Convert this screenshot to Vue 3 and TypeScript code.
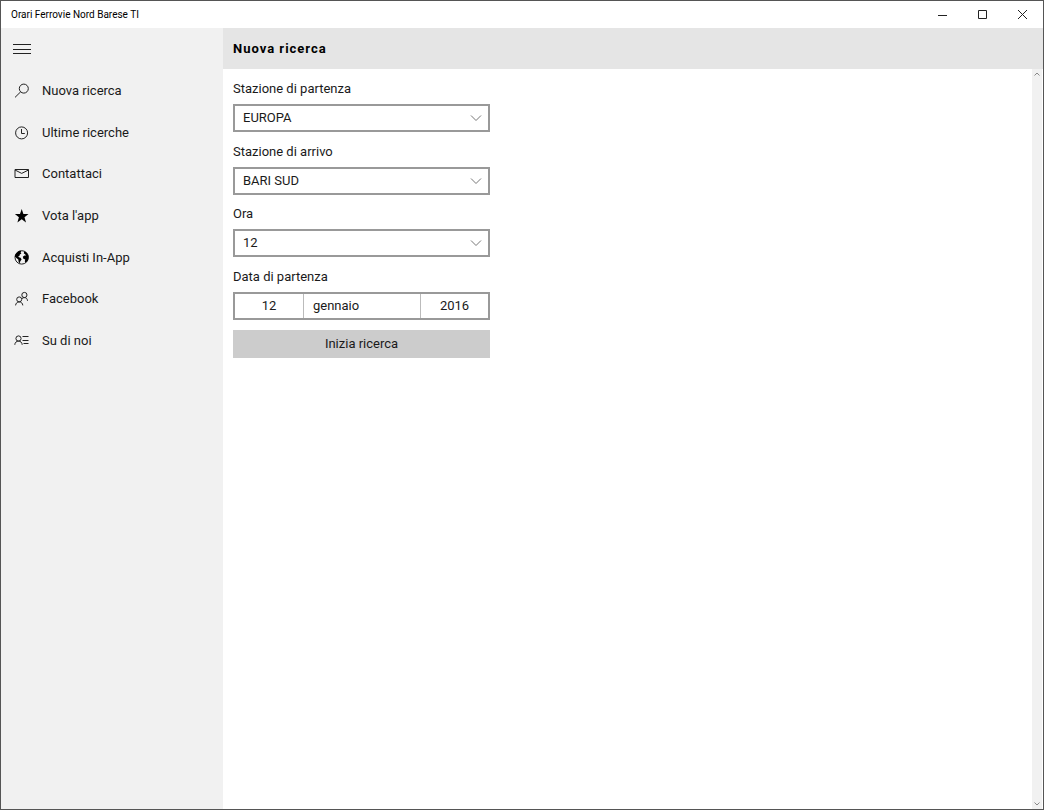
<script setup lang="ts">
import { ref } from 'vue'

interface NavItem {
  id: string
  label: string
}

const navItems: NavItem[] = [
  { id: 'search', label: 'Nuova ricerca' },
  { id: 'clock', label: 'Ultime ricerche' },
  { id: 'mail', label: 'Contattaci' },
  { id: 'star', label: "Vota l'app" },
  { id: 'globe', label: 'Acquisti In-App' },
  { id: 'people', label: 'Facebook' },
  { id: 'about', label: 'Su di noi' },
]

const stations: string[] = ['EUROPA', 'BARI SUD']
const hours: string[] = Array.from({ length: 24 }, (_, i) => String(i))

const departure = ref('EUROPA')
const arrival = ref('BARI SUD')
const hour = ref('12')
const menuOpen = ref(true)
</script>

<template>
  <div class="window">
    <header class="titlebar">
      <span class="app-title">Orari Ferrovie Nord Barese TI</span>
      <div class="controls">
        <button type="button" aria-label="Riduci a icona">
          <svg width="12" height="12" viewBox="0 0 12 12"><path d="M1 6.5H10" /></svg>
        </button>
        <button type="button" aria-label="Ingrandisci">
          <svg width="12" height="12" viewBox="0 0 12 12"><path d="M1.5 1.5H9.5V9.5H1.5Z" /></svg>
        </button>
        <button type="button" aria-label="Chiudi">
          <svg width="12" height="12" viewBox="0 0 12 12"><path d="M1 1L10 10M10 1L1 10" /></svg>
        </button>
      </div>
    </header>

    <div class="body">
      <aside class="sidebar">
        <button type="button" class="burger" aria-label="Menu" @click="menuOpen = !menuOpen">
          <svg width="18" height="12" viewBox="0 0 18 12"><path d="M0 1.5H18M0 6.5H18M0 10.5H18" /></svg>
        </button>
        <nav v-show="menuOpen" class="nav">
          <a v-for="item in navItems" :key="item.id" href="#" class="nav-item">
            <svg class="icon" width="16" height="16" viewBox="0 0 16 16" aria-hidden="true">
              <template v-if="item.id === 'search'">
                <circle cx="9.8" cy="5.6" r="4.5" />
                <path d="M6.7 8.8L1 14.4" />
              </template>
              <template v-else-if="item.id === 'clock'">
                <circle cx="7.6" cy="7.9" r="6" />
                <path d="M7.5 4V8.5H10.8" />
              </template>
              <template v-else-if="item.id === 'mail'">
                <path d="M1 3.5H14.5V11.5H1Z M1 4L7.7 7.4L14.5 4" />
              </template>
              <path
                v-else-if="item.id === 'star'"
                class="solid"
                d="M7.7 1L9.4 5.9H14.5L10.5 9.2L12 14.4L7.7 11.3L3.4 14.4L4.9 9.2L.9 5.9H6Z"
              />
              <template v-else-if="item.id === 'globe'">
                <circle cx="7.7" cy="7.4" r="6.7" />
                <path
                  class="solid"
                  d="M.8 6.4C1.2 3.6 3.4 1.3 6.2 .7L7.4 1.2L6.6 2.6L7.4 3.6L5.8 4.6L5.4 5.9L4.2 6.2L4.9 7.2L6.6 7.8L7.6 9.4L6.3 11.2L5.8 13.6L4.6 11.8L4.3 9.6L2.4 8Z M10.2 1.2C13 2.2 14.6 4.6 14.5 7.6C14.3 9.8 13.3 11.6 11.7 12.8L10.8 11.4L11.2 9.6L9.4 8.8L8.8 6.8L10.4 5.5L11.8 5.8L11.2 4.2L9.8 3.6Z"
                />
              </template>
              <template v-else-if="item.id === 'people'">
                <circle cx="5.2" cy="8.4" r="2.5" />
                <path d="M1.6 14.4C1.7 12.2 3.3 10.9 5.2 10.9S8.7 12.2 8.8 14.4" />
                <circle cx="10.4" cy="4" r="2.6" />
                <path d="M8 7.6C8.7 6.9 9.4 6.6 10.4 6.6C12.3 6.6 13.4 7.9 13.5 9.8" />
              </template>
              <template v-else>
                <circle cx="4.5" cy="5.5" r="2.6" />
                <path d="M.8 11.8C.9 9.5 2.5 8.1 4.5 8.1S8.1 9.5 8.2 11.8" />
                <path d="M8.5 3.5H14.5M8.5 7.5H14.5M9.5 10.5H14.5" />
              </template>
            </svg>
            <span>{{ item.label }}</span>
          </a>
        </nav>
      </aside>

      <main class="main">
        <h1>Nuova ricerca</h1>
        <div class="content">
          <form class="form" @submit.prevent>
            <div class="fields">
              <div class="field">
                <label for="departure">Stazione di partenza</label>
                <div class="select">
                  <select id="departure" v-model="departure">
                    <option v-for="s in stations" :key="s">{{ s }}</option>
                  </select>
                  <svg class="chevron" width="12" height="8" viewBox="0 0 12 8"><path d="M1 1.5L6 6.5L11 1.5" /></svg>
                </div>
              </div>
              <div class="field">
                <label for="arrival">Stazione di arrivo</label>
                <div class="select">
                  <select id="arrival" v-model="arrival">
                    <option v-for="s in stations" :key="s">{{ s }}</option>
                  </select>
                  <svg class="chevron" width="12" height="8" viewBox="0 0 12 8"><path d="M1 1.5L6 6.5L11 1.5" /></svg>
                </div>
              </div>
              <div class="field">
                <label for="hour">Ora</label>
                <div class="select">
                  <select id="hour" v-model="hour">
                    <option v-for="h in hours" :key="h">{{ h }}</option>
                  </select>
                  <svg class="chevron" width="12" height="8" viewBox="0 0 12 8"><path d="M1 1.5L6 6.5L11 1.5" /></svg>
                </div>
              </div>
              <div class="field">
                <span id="date-label">Data di partenza</span>
                <div class="date" role="group" aria-labelledby="date-label">
                  <button type="button">12</button>
                  <button type="button" class="month">gennaio</button>
                  <button type="button">2016</button>
                </div>
              </div>
            </div>
            <button type="submit" class="submit">Inizia ricerca</button>
          </form>
          <div class="scrollbar" aria-hidden="true">
            <svg width="8" height="6" viewBox="0 0 8 6"><path d="M1.5 4.5L4 2L6.5 4.5" /></svg>
            <svg width="8" height="6" viewBox="0 0 8 6"><path d="M1.5 1.5L4 4L6.5 1.5" /></svg>
          </div>
        </div>
      </main>
    </div>
  </div>
</template>

<style>
html,
body,
#app {
  height: 100%;
  margin: 0;
}
</style>

<style scoped>
.window {
  box-sizing: border-box;
  min-height: 100%;
  display: flex;
  flex-direction: column;
  border: 1px solid #555;
  background: #fff;
  color: #1a1a1a;
  font: 13px/20px Roboto, "Open Sans", sans-serif;
}

button,
select {
  margin: 0;
  padding: 0;
  border: 0;
  border-radius: 0;
  background: transparent;
  color: inherit;
  font: inherit;
}

svg {
  display: block;
  fill: none;
  stroke: #222;
  stroke-width: 1;
}

.titlebar {
  display: flex;
  align-items: center;
  justify-content: space-between;
  height: 27px;
  padding-left: 10px;
}

.app-title {
  font-size: 10px;
  color: #000;
}

.controls {
  display: flex;
}

.controls button {
  display: flex;
  align-items: center;
  justify-content: center;
  width: 40px;
  height: 26px;
}

.body {
  flex: 1;
  display: flex;
}

.sidebar {
  flex: none;
  width: 222px;
  background: #f1f1f1;
}

.burger {
  display: flex;
  align-items: center;
  height: 42px;
  padding: 0 12px;
}

.nav {
  display: grid;
  grid-auto-rows: 1fr;
  min-height: 292px;
}

.nav-item {
  display: flex;
  align-items: center;
  gap: 12px;
  padding: 0 13px;
  color: inherit;
  text-decoration: none;
}

.icon .solid {
  fill: #000;
  stroke: none;
}

.main {
  flex: 1;
  min-width: 0;
  display: flex;
  flex-direction: column;
}

h1 {
  margin: 0;
  padding: 0 10px;
  background: #e5e5e5;
  color: #000;
  font-size: 13px;
  line-height: 41px;
  font-weight: 700;
  letter-spacing: 1px;
}

.content {
  flex: 1;
  display: flex;
  justify-content: space-between;
}

.form {
  width: 257px;
  padding: 10px;
}

.fields {
  display: grid;
  grid-auto-rows: 1fr;
  min-height: 250px;
}

.field {
  display: flex;
  flex-direction: column;
  gap: 5px;
}

.select {
  position: relative;
}

.select select {
  display: block;
  box-sizing: border-box;
  width: 100%;
  height: 28px;
  padding: 0 28px 0 8px;
  border: 2px solid #999;
  background: #fff;
  appearance: none;
}

.chevron {
  position: absolute;
  top: 10px;
  right: 8px;
  stroke: #777;
  pointer-events: none;
}

.date {
  box-sizing: border-box;
  display: grid;
  grid-template-columns: 68px 1fr 68px;
  height: 28px;
  border: 2px solid #999;
}

.date button + button {
  border-left: 1px solid #bbb;
}

.date .month {
  padding-left: 9px;
  text-align: left;
}

.submit {
  width: 100%;
  height: 28px;
  margin-top: 1px;
  background: #ccc;
}

.scrollbar {
  display: flex;
  flex-direction: column;
  justify-content: space-between;
  align-items: center;
  width: 10px;
  padding: 2px 0;
  border-right: 1px solid #fff;
  background: #f1f1f1;
}

.scrollbar svg {
  stroke: #888;
}
</style>
